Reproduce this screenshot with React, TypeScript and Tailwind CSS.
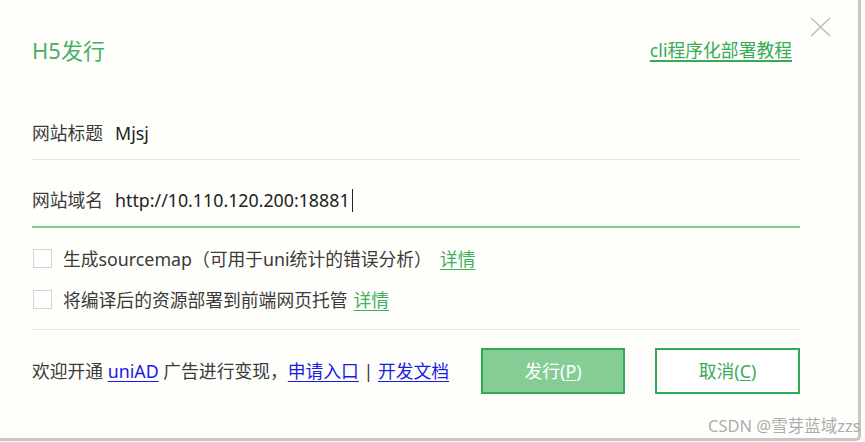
import React from 'react';

const font = { fontFamily: '"Noto Sans", "Noto Sans CJK SC", sans-serif' };

function CheckRow({ text, className }: { text: React.ReactNode; className?: string }) {
  return (
    <div className={`flex items-center h-[20px] ${className ?? ''}`}>
      <span className="w-[19px] h-[19px] border-[1.5px] border-[#d4d4d0] bg-white shrink-0 ml-px" />
      <span className="ml-[11px] text-[17.8px] leading-[20px] text-[#3a3a3a] pt-[1px]">{text}</span>
    </div>
  );
}

export default function App() {
  return (
    <div className="w-[865px] h-[442px] bg-[#fbfbf8] relative" style={font}>
      <div className="w-[861px] h-[441px] bg-[#fefefb] border-r-[3px] border-b-[3px] border-[#c8c8c1] rounded-br-[5px] flex flex-col pl-[32px] pr-[58px]">
        {/* header */}
        <div className="flex items-center justify-between h-[30px] mt-[35px] pr-[8px]">
          <h1 className="text-[22px] font-normal text-[#4caf66]">H5发行</h1>
          <a className="text-[17.8px] text-[#38a957] underline underline-offset-[3px] decoration-[1.5px]">
            cli程序化部署教程
          </a>
        </div>

        {/* fields */}
        <div className="flex items-center h-[24px] mt-[56px] text-[17.8px]">
          <span className="w-[83px] text-[#3a3a3a]">网站标题</span>
          <span className="text-[#222]">Mjsj</span>
        </div>
        <div className="h-px bg-[#e4e4e2] mt-[14px]" />

        <div className="flex items-center h-[24px] mt-[28px] text-[17.8px]">
          <span className="w-[83px] text-[#3a3a3a]">网站域名</span>
          <span className="text-[#222]">http://10.110.120.200:18881</span>
          <span className="w-px h-[23px] bg-[#222] ml-[2px]" />
        </div>
        <div className="h-[2px] bg-[#76d08b] mt-[14px]" />

        {/* options */}
        <CheckRow
          className="mt-[20px]"
          text={
            <>
              生成sourcemap（可用于uni统计的错误分析）
              <a className="ml-[8px] text-[#3fb060] underline underline-offset-[3px]">详情</a>
            </>
          }
        />
        <CheckRow
          className="mt-[21px]"
          text={
            <>
              将编译后的资源部署到前端网页托管
              <a className="ml-[6px] text-[#3fb060] underline underline-offset-[3px]">详情</a>
            </>
          }
        />
        <div className="h-px bg-[#e4e4e2] mt-[20px]" />

        {/* footer */}
        <div className="flex items-center mt-[18px]">
          <p className="flex-1 text-[17.8px] text-[#3a3a3a] whitespace-nowrap">
            欢迎开通 <a className="text-[#1a1ae6] underline underline-offset-[3px]">uniAD</a> 广告进行变现，
            <a className="text-[#1a1ae6] underline underline-offset-[3px]">申请入口</a> |{' '}
            <a className="text-[#1a1ae6] underline underline-offset-[3px]">开发文档</a>
          </p>
          <div className="flex gap-[30px]">
            <button className="w-[144px] h-[46px] bg-[#86cd95] border-2 border-[#2faa55] text-white text-[17.8px]">
              发行(<span className="underline underline-offset-2">P</span>)
            </button>
            <button className="w-[145px] h-[46px] bg-white border-2 border-[#2faa55] text-[#3aaa5c] text-[17.8px]">
              取消(<span className="underline underline-offset-2">C</span>)
            </button>
          </div>
        </div>
      </div>

      {/* close */}
      <svg className="absolute left-[810px] top-[17px]" width="21" height="20" viewBox="0 0 21 20">
        <path d="M1 1 L20 19 M20 1 L1 19" stroke="#bdbdbd" strokeWidth="1.5" fill="none" />
      </svg>

      {/* watermark */}
      <div className="absolute left-[708px] top-[414px] text-[16.5px] text-[#adadad] whitespace-nowrap">
        CSDN @雪芽蓝域zzs
      </div>
    </div>
  );
}
